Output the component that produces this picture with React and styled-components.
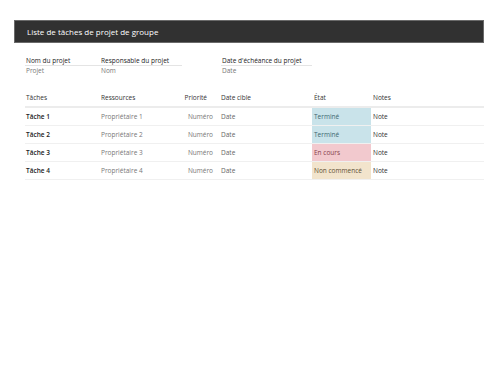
import React from "react";
import styled, { createGlobalStyle } from "styled-components";

const Global = createGlobalStyle`
  body {
    margin: 0;
    background: #ffffff;
    font-family: "Open Sans", "Noto Sans", sans-serif;
  }
`;

const Page = styled.div`
  padding: 20px 14px 0 14px;
`;

const TitleBar = styled.div`
  height: 23px;
  box-sizing: border-box;
  background: #313131;
  border: 1px solid #6a6a6a;
  color: #ffffff;
  font-size: 8px;
  display: flex;
  align-items: center;
  padding-left: 12px;
`;

const Info = styled.div`
  display: grid;
  grid-template-columns: 75px 82px 39px 91px;
  margin: 13px 0 0 11px;
`;

const InfoBlock = styled.div`
  grid-column: ${(props) => props.col};
`;

const InfoLabel = styled.div`
  font-size: 6.5px;
  color: #222;
  line-height: 9px;
  padding-left: 1px;
  border-bottom: 1px solid #e4e4e4;
`;

const InfoValue = styled.div`
  font-size: 6.5px;
  color: #777;
  line-height: 9px;
  padding-left: 1px;
`;

const Table = styled.div`
  margin: 14px 0 0 11px;
  width: 459px;
`;

const Row = styled.div`
  display: grid;
  grid-template-columns: 75px 75px 40px 97px 59px 113px;
  box-sizing: border-box;
  height: ${(props) => (props.head ? "19px" : "18px")};
  border-bottom: ${(props) => (props.head ? "2px solid #ececec" : "1px solid #f0f0f0")};
  font-size: 6.5px;
`;

const Cell = styled.div`
  display: flex;
  align-items: center;
  padding: ${(props) => props.pad || "0 0 0 1px"};
  justify-content: ${(props) => (props.right ? "flex-end" : "flex-start")};
  color: ${(props) => props.color || "#333"};
  font-weight: ${(props) => (props.bold ? 600 : 400)};
  background: ${(props) => props.bg || "transparent"};
`;

const statusStyle = {
  "Terminé": { bg: "#c9e3ea", color: "#3d6670" },
  "En cours": { bg: "#f2c9ce", color: "#86404a" },
  "Non commencé": { bg: "#f2e4cc", color: "#5e4f33" },
};

const tasks = [
  { name: "Tâche 1", owner: "Propriétaire 1", status: "Terminé" },
  { name: "Tâche 2", owner: "Propriétaire 2", status: "Terminé" },
  { name: "Tâche 3", owner: "Propriétaire 3", status: "En cours" },
  { name: "Tâche 4", owner: "Propriétaire 4", status: "Non commencé" },
];

export default function App() {
  return (
    <Page>
      <Global />
      <TitleBar>Liste de tâches de projet de groupe</TitleBar>
      <Info>
        <InfoBlock col="1">
          <InfoLabel>Nom du projet</InfoLabel>
          <InfoValue>Projet</InfoValue>
        </InfoBlock>
        <InfoBlock col="2">
          <InfoLabel>Responsable du projet</InfoLabel>
          <InfoValue>Nom</InfoValue>
        </InfoBlock>
        <InfoBlock col="4">
          <InfoLabel>Date d'échéance du projet</InfoLabel>
          <InfoValue>Date</InfoValue>
        </InfoBlock>
      </Info>
      <Table>
        <Row head>
          <Cell>Tâches</Cell>
          <Cell>Ressources</Cell>
          <Cell right pad="0 8px 0 0">Priorité</Cell>
          <Cell pad="0 0 0 6px">Date cible</Cell>
          <Cell pad="0 0 0 2px">État</Cell>
          <Cell pad="0 0 0 2px">Notes</Cell>
        </Row>
        {tasks.map((t) => (
          <Row key={t.name}>
            <Cell bold color="#222">{t.name}</Cell>
            <Cell color="#777">{t.owner}</Cell>
            <Cell right pad="0 2px 0 0" color="#777">Numéro</Cell>
            <Cell pad="0 0 0 6px" color="#666">Date</Cell>
            <Cell pad="0 0 0 2px" bg={statusStyle[t.status].bg} color={statusStyle[t.status].color}>
              {t.status}
            </Cell>
            <Cell pad="0 0 0 2px">Note</Cell>
          </Row>
        ))}
      </Table>
    </Page>
  );
}
